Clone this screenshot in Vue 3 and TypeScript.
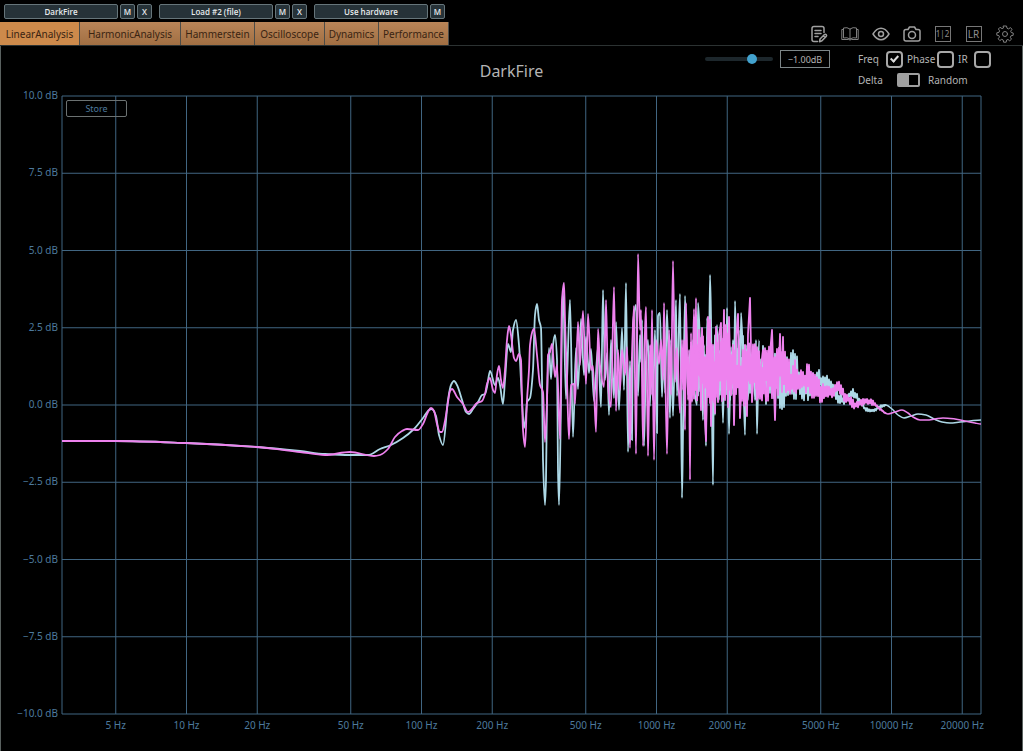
<script setup lang="ts">
import { ref } from 'vue'

type Point = [number, number]

interface Slot {
  name: string
  closable: boolean
}

const slots: Slot[] = [
  { name: 'DarkFire', closable: true },
  { name: 'Load #2 (file)', closable: true },
  { name: 'Use hardware', closable: false },
]

const tabs = ['LinearAnalysis', 'HarmonicAnalysis', 'Hammerstein', 'Oscilloscope', 'Dynamics', 'Performance']
const activeTab = ref('LinearAnalysis')

const gain = ref(72)
const readout = ref('−1.00dB')
const freq = ref(true)
const phase = ref(false)
const ir = ref(false)
const random = ref(false)

/* Plot space: 919 x 618 units, origin at (62, 96); 235 units per decade */
const LEFT = 62
const TOP = 96
const WIDTH = 919
const HEIGHT = 618

const frequencies = [5, 10, 20, 50, 100, 200, 500, 1000, 2000, 5000, 10000, 20000]
const xOf = (hz: number): number => 186.5 + 235 * Math.log10(hz / 10)
const percentOf = (hz: number): string => `${((xOf(hz) - LEFT) / WIDTH) * 100}%`

const levels = [10, 7.5, 5, 2.5, 0, -2.5, -5, -7.5, -10]
const yOf = (db: number): number => 405 - 30.9 * db
const levelLabel = (db: number): string => `${db < 0 ? '−' : ''}${Math.abs(db).toFixed(1)} dB`

function parse(list: string): Point[] {
  return list
    .trim()
    .split(/\s+/)
    .map((pair) => pair.split(',').map(Number) as Point)
}

/* Smooth curve through the points, flat at local peaks */
function smooth(points: Point[]): string {
  const slope = (i: number): number => {
    if (i === 0 || i === points.length - 1) return 0
    const a = (points[i][1] - points[i - 1][1]) / (points[i][0] - points[i - 1][0])
    const b = (points[i + 1][1] - points[i][1]) / (points[i + 1][0] - points[i][0])
    return a * b <= 0 ? 0 : (2 * a * b) / (a + b)
  }
  let d = `M${points[0].join(' ')}`
  for (let i = 1; i < points.length; i++) {
    const [x0, y0] = points[i - 1]
    const [x1, y1] = points[i]
    const h = (x1 - x0) / 3
    d += `C${x0 + h} ${y0 + slope(i - 1) * h} ${x1 - h} ${y1 - slope(i) * h} ${x1} ${y1}`
  }
  return d
}

const line = (points: Point[]): string => 'M' + points.map((p) => p.join(' ')).join('L')

function interpolate(points: Point[], x: number): number {
  let i = 1
  while (i < points.length - 1 && points[i][0] < x) i++
  const [x0, y0] = points[i - 1]
  const [x1, y1] = points[i]
  return y0 + ((y1 - y0) * (x - x0)) / (x1 - x0)
}

/* Ripple that swings between an upper and a lower envelope */
function ripple(upper: Point[], lower: Point[], seed: number, step: number): string {
  let state = seed
  const next = (): number => {
    state = (state * 16807) % 2147483647
    return state / 2147483647
  }
  const out: Point[] = []
  let high = true
  for (let x = upper[0][0]; x <= upper[upper.length - 1][0]; x += step) {
    const a = interpolate(upper, x)
    const b = interpolate(lower, x)
    const inset = (b - a) * 0.4 * next()
    out.push([x, high ? a + inset : b - inset])
    high = !high
  }
  return line(out)
}

const blueLow = parse(`62,441 115,441 186,443 257,447 300,451 325,454 350,455 368,455 380,449 391,445 403,438
  414,429 423,418 429,410 432,409 436,416 439,435 443,445 448,400 451,385 454,381 457,385 462,400 466,412 469,414
  473,409 478,402 482,395 485,394 487,387 490,371 495,385 498,378 500,385 503,404 505,380 508,344 511,352 513,330
  516,320 519,345 522,400 524,428 526,415 527,402 530,398 533,370 535,315 537,304 539,320 541,328 542,380 543,460
  545,505 546,480 547,400 549,348 551,379 553,345 555,335 557,360 558,470 559,505 561,400 562,320 563,290 566,399
  570,300 573,437 576,348 578,389 581,319 584,375 586,337 589,373 591,349 594,401 598,347 601,407 603,290 605,380
  607,353 609,415 611,340 614,398 616,322 619,410 622,328 624,390 626,283 628,452 630,361 632,440 633,325 636,305
  638,396 640,335 641,362 642,320 644,446 646,360 648,340 650,406 651,358 653,400 655,330 657,433 658,316 660,313
  662,397 664,340 665,393 667,310 670,418 671,340 673,416 676,300 677,396 680,294 682,498 683,433 685,296 688,395
  690,350 692,401 693,340 695,395 697,405 698,303 700,341 702,380 703,420 704,345 706,446 707,318 709,360 710,275
  711,318 713,485 714,350 715,415 717,325 719,400 721,330 723,423 725,330 726,390 727,308 729,434 731,347 732,395
  733,340 734,400 735,301 737,380 739,330 740,418 741,313 743,360 745,435 746,345 748,400 750,350 752,395 753,346
  755,400 756,340 757,434 759,340`)

const pinkLow = parse(`62,441 115,441 186,443 257,447 300,452 325,455 350,452 374,456 380,455 388,449 395,437
  402,431 407,429 418,430 423,424 428,412 431,408 434,411 437,424 440,432 442,432 445,421 448,402 450,391 452,389
  457,397 463,404 468,412 471,410 477,403 482,401 485,394 487,384 490,378 493,390 495,393 497,375 499,366 501,380
  503,388 505,370 507,340 509,326 511,335 514,358 516,361 519,354 521,360 522,400 523,430 525,447 527,400 529,370
  530,345 533,330 534,329 537,355 540,385 543,392 545,442 547,400 548,355 550,352 552,344 555,377 557,365 560,439
  562,300 564,283 565,320 567,380 569,439 571,385 574,384 575,404 578,322 580,365 583,311 586,384 588,314 591,370
  593,366 596,432 598,329 600,365 604,387 606,300 608,385 611,407 614,287 616,411 618,350 620,390 622,350 625,375
  627,347 630,448 632,355 634,306 636,454 638,254 640,330 641,310 643,446 645,330 646,307 648,456 650,345 651,395
  652,310 654,460 656,340 659,364 661,340 663,380 664,303 667,454 669,330 671,395 673,261 675,382 677,348 680,413
  682,340 683,390 684,340 685,430 686,303 688,400 689,350 690,480 691,333 692,402 694,309 695,385 696,298 697,401`)

const pinkSpikes = parse(`697,401 699,330 701,410 702,328 704,400 706,441 708,317 709,380 710,320 711,426 713,345
  715,413 716,327 718,402 719,335 721,323 722,401 724,310 725,400 726,325 728,407 729,317 731,395 733,345 734,425
  736,340 738,314 740,418 743,350 747,416 748,334 750,298 752,402 755,350 757,400 763,350 766,401 772,330 775,420
  777,349 778,395 780,334 782,392 783,337 784,385`)

const pinkUpper = parse(`691,340 705,328 715,335 722,325 735,340 743,350 749,334 757,345 765,348 772,330 776,350
  783,342 787,358 795,360 803,363 808,361 815,371 820,381 828,386 835,381 838,379 843,387 850,396 855,400 867,397
  873,400 880,408 886,413`)
const pinkLower = parse(`691,400 705,405 715,405 730,402 745,408 757,400 765,403 775,405 780,396 787,397 795,402
  803,395 810,399 822,405 830,398 838,396 845,403 852,409 860,408 866,404 875,406 885,414 886,414`)

const blueUpper = parse(`691,345 710,325 730,330 745,332 757,345 762,336 767,342 771,332 775,346 785,353 790,347
  796,351 800,363 810,370 815,373 818,365 822,376 826,371 830,380 836,389 843,396 848,394 852,388 856,391 860,399
  865,407 870,409 876,408 881,405 886,404`)
const blueLower = parse(`691,395 710,405 730,403 745,400 757,402 770,405 777,407 782,411 787,403 800,399 806,407
  812,398 820,393 830,396 836,403 840,405 845,404 850,397 856,401 862,406 866,411 870,413 875,411 881,408 886,406`)

const blueTail = parse(`870,411 876,409 881,406 886,405 892,409 898,415 904,418 911,416 918,414 926,415 934,419
  942,422 950,423 960,422 970,421 981,420`)
const pinkTail = parse(`880,409 885,413 888,414 895,412 902,410 908,413 913,417 920,420 927,420 935,419 943,418
  955,419 965,421 975,423 981,424`)

const traces = [
  { name: 'blue', paths: [smooth(blueLow), ripple(blueUpper, blueLower, 4711, 1), smooth(blueTail)] },
  {
    name: 'pink',
    paths: [smooth(pinkLow), line(pinkSpikes), ripple(pinkUpper, pinkLower, 9127, 1), smooth(pinkTail)],
  },
]
</script>

<template>
  <main class="app">
    <div class="slots">
      <div v-for="slot in slots" :key="slot.name" class="slot">
        <button class="chip chip-name" type="button">{{ slot.name }}</button>
        <button class="chip" type="button">M</button>
        <button v-if="slot.closable" class="chip" type="button">X</button>
      </div>
    </div>

    <header class="bar">
      <nav class="tabs">
        <button
          v-for="tab in tabs"
          :key="tab"
          class="tab"
          :class="{ active: tab === activeTab }"
          type="button"
          @click="activeTab = tab"
        >
          {{ tab }}
        </button>
      </nav>
      <div class="tools">
        <button class="tool" type="button" aria-label="Notes">
          <svg class="bold" viewBox="0 0 18 18">
            <path d="M7.5 16.500H4Q2 16.500 2 14.500V3.500Q2 1.500 4 1.500H12Q14 1.500 14 3.500V7.500M5 5.500H11M5 8.500H11M5 11.500H8" />
            <path d="M9.500 16.800L10 14L14.500 9.500Q15.500 8.800 16.300 9.700Q17 10.600 16.200 11.400L12 15.700ZM13.300 10.800L15 12.500" />
          </svg>
        </button>
        <button class="tool" type="button" aria-label="Manual">
          <svg class="dim" viewBox="0 0 18 18">
            <path d="M9 4Q6 1.800 2.500 3V13Q6 12 9 14Q12 12 15.500 13V3Q12 1.800 9 4V14M2.500 4.500H.8V14.500H7.500Q9 15.500 10.500 14.500H17.200V4.500H15.500" />
          </svg>
        </button>
        <button class="tool" type="button" aria-label="View">
          <svg class="bold" viewBox="0 0 18 18">
            <path d="M1 9Q4.500 3.300 9 3.300T17 9Q13.500 14.700 9 14.700T1 9Z" />
            <circle cx="9" cy="9" r="2.500" />
          </svg>
        </button>
        <button class="tool" type="button" aria-label="Snapshot">
          <svg class="bold" viewBox="0 0 18 18">
            <path d="M3 4.500H5L6.500 2H11.500L13 4.500H15Q17 4.500 17 6.500V14Q17 16 15 16H3Q1 16 1 14V6.500Q1 4.500 3 4.500Z" />
            <circle cx="9" cy="10" r="3.500" />
          </svg>
        </button>
        <button class="tool" type="button" aria-label="Compare 1 and 2"><span class="boxed small">1|2</span></button>
        <button class="tool" type="button" aria-label="Left and right"><span class="boxed">LR</span></button>
        <button class="tool" type="button" aria-label="Settings">
          <svg class="dim" viewBox="0 0 18 18">
            <path d="M7.500 1H10.500L11 3.200L12.500 3.900L14.500 2.600L16 4.300L14.700 6.200L15.200 7.500L17.200 8V10.300L15 10.800L14.300 12.300L15.500 14.200L13.700 15.800L12 14.500L10.600 15L10.200 17.200H7.600L7.200 15L5.700 14.300L3.800 15.600L2.200 13.800L3.500 12L2.900 10.600L.8 10.200V7.800L3 7.300L3.600 5.800L2.400 4L4 2.300L6 3.600L7.200 3.100Z" />
            <circle cx="9" cy="9" r="2.500" />
          </svg>
        </button>
      </div>
    </header>

    <section class="panel">
      <div class="heading">
        <h1 class="title">DarkFire</h1>
        <div class="controls">
          <div class="level">
            <input v-model="gain" class="slider" type="range" min="0" max="100" aria-label="Gain" />
            <input v-model="readout" class="readout" type="text" aria-label="Gain value" />
          </div>
          <div class="options">
            <div class="option-row">
              <label for="freq">Freq</label>
              <input id="freq" v-model="freq" class="tick" type="checkbox" />
              <label for="phase">Phase</label>
              <input id="phase" v-model="phase" class="tick" type="checkbox" />
              <label for="ir">IR</label>
              <input id="ir" v-model="ir" class="tick" type="checkbox" />
            </div>
            <div class="option-row mode">
              <label for="mode">Delta</label>
              <input id="mode" v-model="random" class="switch" type="checkbox" role="switch" />
              <label for="mode">Random</label>
            </div>
          </div>
        </div>
      </div>

      <div class="chart">
        <div class="y-axis">
          <span v-for="db in levels" :key="db">{{ levelLabel(db) }}</span>
        </div>
        <div class="plot">
          <svg class="graph" :viewBox="`${LEFT} ${TOP} ${WIDTH} ${HEIGHT}`" preserveAspectRatio="none">
            <g class="grid">
              <line v-for="db in levels" :key="db" :x1="LEFT" :x2="LEFT + WIDTH" :y1="yOf(db)" :y2="yOf(db)" />
              <line v-for="hz in frequencies" :key="hz" :x1="xOf(hz)" :x2="xOf(hz)" :y1="TOP" :y2="TOP + HEIGHT" />
              <line :x1="LEFT" :x2="LEFT" :y1="TOP" :y2="TOP + HEIGHT" />
              <line :x1="LEFT + WIDTH" :x2="LEFT + WIDTH" :y1="TOP" :y2="TOP + HEIGHT" />
            </g>
            <g v-for="trace in traces" :key="trace.name" :class="['trace', trace.name]">
              <path v-for="(d, i) in trace.paths" :key="i" :d="d" />
            </g>
          </svg>
          <button class="store" type="button">Store</button>
        </div>
        <div class="x-axis">
          <span v-for="hz in frequencies" :key="hz" :style="{ left: percentOf(hz) }">{{ hz }} Hz</span>
        </div>
      </div>
    </section>
  </main>
</template>

<style>
body {
  margin: 0;
  background: #000;
}
</style>

<style scoped>
.app {
  box-sizing: border-box;
  display: flex;
  flex-direction: column;
  min-height: 100vh;
  background: #000;
  color: #b4b4b4;
  font-family: 'Noto Sans', 'Open Sans', sans-serif;
  font-size: 10px;
}

button,
input {
  box-sizing: border-box;
  margin: 0;
  padding: 0;
  font: inherit;
}

.slots {
  display: flex;
  gap: 7px;
  padding: 4px 4px 3px;
}

.slot {
  display: flex;
  gap: 2px;
}

.chip {
  width: 15px;
  height: 15px;
  border: 1px solid #66757a;
  border-radius: 2px;
  background: #263238;
  color: #e8ebec;
  font-family: 'Open Sans', 'Noto Sans', sans-serif;
  font-size: 8px;
  font-weight: 600;
  line-height: 13px;
}

.chip-name {
  width: 114px;
}

.bar {
  display: flex;
  justify-content: space-between;
  height: 23px;
  border-bottom: 1px solid #2c3232;
}

.tabs {
  display: grid;
  grid-template-columns: 80px 101px 74px 70px 54px 70px;
}

.tab {
  border: 0;
  border-right: 1px solid #4c4c48;
  background: linear-gradient(#b98558, #a16f43);
  color: #3a2412;
  line-height: 22px;
  text-align: center;
  white-space: nowrap;
}

.tab.active {
  background: #cd8a4b;
}

.tools {
  display: flex;
  padding-right: 3px;
}

.tool {
  display: grid;
  place-items: center;
  width: 31px;
  height: 23px;
  border: 0;
  background: none;
  color: #8e8e8e;
}

.tool svg {
  width: 18px;
  height: 18px;
  fill: none;
  stroke: #a0a0a0;
  stroke-width: 1.5;
  stroke-linejoin: round;
  stroke-linecap: round;
}

.tool svg.dim {
  stroke: #808080;
  stroke-width: 1;
}

.boxed {
  box-sizing: border-box;
  width: 16px;
  height: 16px;
  border: 1px solid #777;
  font-size: 10px;
  line-height: 14px;
}

.boxed.small {
  font-size: 8px;
}

.panel {
  display: flex;
  flex: 1;
  flex-direction: column;
  border: solid #59615f;
  border-width: 0 1px;
}

.heading {
  display: grid;
  grid-template-columns: 1fr auto 1fr;
  height: 50px;
}

.title {
  grid-column: 2;
  margin: 14px 0 0;
  font-size: 16px;
  font-weight: 400;
  line-height: 22px;
}

.controls {
  display: flex;
  justify-content: flex-end;
  gap: 28px;
  padding: 4px 31px 0 0;
}

.level {
  display: flex;
  gap: 7px;
  align-items: center;
  height: 18px;
}

.slider {
  width: 68px;
  height: 10px;
  appearance: none;
  background: none;
}

.slider::-webkit-slider-runnable-track {
  height: 4px;
  border-radius: 2px;
  background: #1d272c;
}

.slider::-webkit-slider-thumb {
  width: 10px;
  height: 10px;
  margin-top: -3px;
  appearance: none;
  border-radius: 50%;
  background: #42a2ce;
}

.readout {
  width: 50px;
  height: 18px;
  border: 1px solid #7d8688;
  background: #000;
  color: #b4b4b4;
  font-size: 9px;
  text-align: center;
}

.options {
  display: flex;
  flex-direction: column;
  gap: 3px;
}

.option-row {
  display: flex;
  gap: 4px;
  align-items: center;
  height: 18px;
}

.option-row label[for='freq'] {
  width: 24px;
}

.option-row label[for='phase'] {
  width: 26px;
}

.option-row label[for='ir'] {
  width: 12px;
}

.tick {
  display: grid;
  place-items: center;
  width: 17px;
  height: 17px;
  appearance: none;
  border: 2px solid #a8a8a8;
  border-radius: 4px;
  background: #000;
}

.tick:checked::before {
  width: 3px;
  height: 6px;
  border: solid #d8d8d8;
  border-width: 0 2px 2px 0;
  content: '';
  transform: translateY(-1px) rotate(42deg);
}

.mode {
  gap: 8px;
}

.mode label:first-child {
  width: 31px;
}

.switch {
  width: 23px;
  height: 14px;
  appearance: none;
  border: 2px solid #a0a0a0;
  border-radius: 2px;
  background: linear-gradient(90deg, #a0a0a0 50%, #000 50%);
}

.switch:checked {
  background: linear-gradient(90deg, #000 50%, #a0a0a0 50%);
}

.chart {
  display: grid;
  flex: 1;
  grid-template-rows: 1fr 37px;
  grid-template-columns: 61px 1fr 41px;
  color: #4d7a9d;
  line-height: 14px;
}

.y-axis {
  display: flex;
  flex-direction: column;
  justify-content: space-between;
  margin: -8px 4px -6px 0;
  text-align: right;
}

.plot {
  display: grid;
  min-height: 300px;
}

.graph,
.store {
  grid-area: 1 / 1;
}

.graph {
  width: 100%;
  height: 100%;
  min-height: 0;
  overflow: visible;
}

.grid line {
  stroke: #416682;
  stroke-width: 1;
  vector-effect: non-scaling-stroke;
}

.trace path {
  fill: none;
  stroke-width: 1.8;
  stroke-linejoin: round;
  vector-effect: non-scaling-stroke;
}

.blue path {
  stroke: #add8e6;
}

.pink path {
  stroke: #ee82ee;
}

.trace path:last-child {
  stroke-width: 1.5;
}

.store {
  z-index: 1;
  width: 61px;
  height: 17px;
  margin: 4px;
  border: 1px solid #6c7272;
  border-radius: 2px;
  background: none;
  color: #4d7a9d;
  font-size: 9px;
  line-height: 15px;
}

.x-axis {
  position: relative;
  grid-column: 2;
}

.x-axis span {
  position: absolute;
  top: 4px;
  transform: translateX(-50%);
  white-space: nowrap;
}
</style>
